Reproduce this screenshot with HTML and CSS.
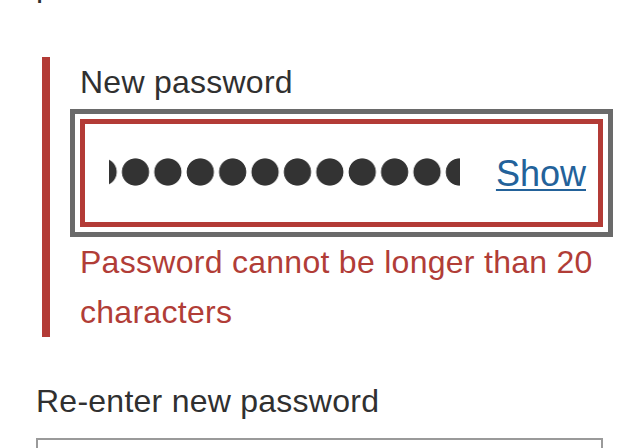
FILE: index.html
```html
<!DOCTYPE html>
<html lang="en">
<head>
<meta charset="utf-8">
<title>Change password</title>
<link rel="stylesheet" href="styles.css">
</head>
<body>
<main class="page">
  <p class="hint">password.</p>
  <div class="group group-error">
    <label class="label" for="new-pw">New password</label>
    <div class="input input-error" id="new-pw">
      <span class="dots" aria-hidden="true"></span>
      <a class="show" href="#">Show</a>
    </div>
    <p class="error-msg">Password cannot be longer than 20 characters</p>
  </div>
  <div class="group">
    <label class="label" for="re-pw">Re-enter new password</label>
    <div class="input input-plain" id="re-pw"></div>
  </div>
</main>
</body>
</html>
```
FILE: styles.css
```css
html, body {
  margin: 0;
  padding: 0;
  background: #ffffff;
  overflow: hidden;
}
body {
  font-family: "Liberation Sans", Arial, sans-serif;
  color: #303030;
  width: 640px;
  height: 448px;
}
.page {
  padding: 0 37px 0 36px;
}
.hint {
  margin: -35px 0 52px 0;
  font-size: 32px;
  line-height: 40px;
  color: #303030;
}
.group-error {
  margin-left: 6px;
  border-left: 8px solid #b33b36;
  padding: 5px 0 0 30px;
  margin-bottom: 44px;
}
.label {
  display: block;
  font-size: 32px;
  line-height: 40px;
  letter-spacing: 0.25px;
  color: #303030;
  margin-bottom: 17px;
}
.input {
  box-sizing: border-box;
}
.input-error {
  height: 108px;
  border: 5px solid #b33b36;
  outline: 5px solid #6a6a6a;
  outline-offset: 5px;
  display: flex;
  align-items: center;
  padding: 0 12px 0 24px;
  margin-bottom: 10px;
}
.dots {
  display: block;
  width: 351px;
  height: 28px;
  margin-top: -2px;
  background-image: radial-gradient(circle at 16.2px 14px, #333333 13.2px, rgba(51,51,51,0) 14px);
  background-size: 32.4px 28px;
  background-repeat: repeat-x;
  background-position: -22.1px 0;
}
.show {
  margin-left: auto;
  font-size: 36px;
  line-height: 40px;
  color: #23629a;
  text-decoration: underline;
  text-decoration-thickness: 2px;
  text-underline-offset: 3px;
  margin-top: 2px;
}
.error-msg {
  margin: 0;
  font-size: 32px;
  line-height: 50px;
  letter-spacing: 0.28px;
  color: #b13d37;
}
.input-plain {
  height: 40px;
  margin-top: 1px;
  border: 2px solid #9a9a9a;
  border-bottom: none;
}
```
